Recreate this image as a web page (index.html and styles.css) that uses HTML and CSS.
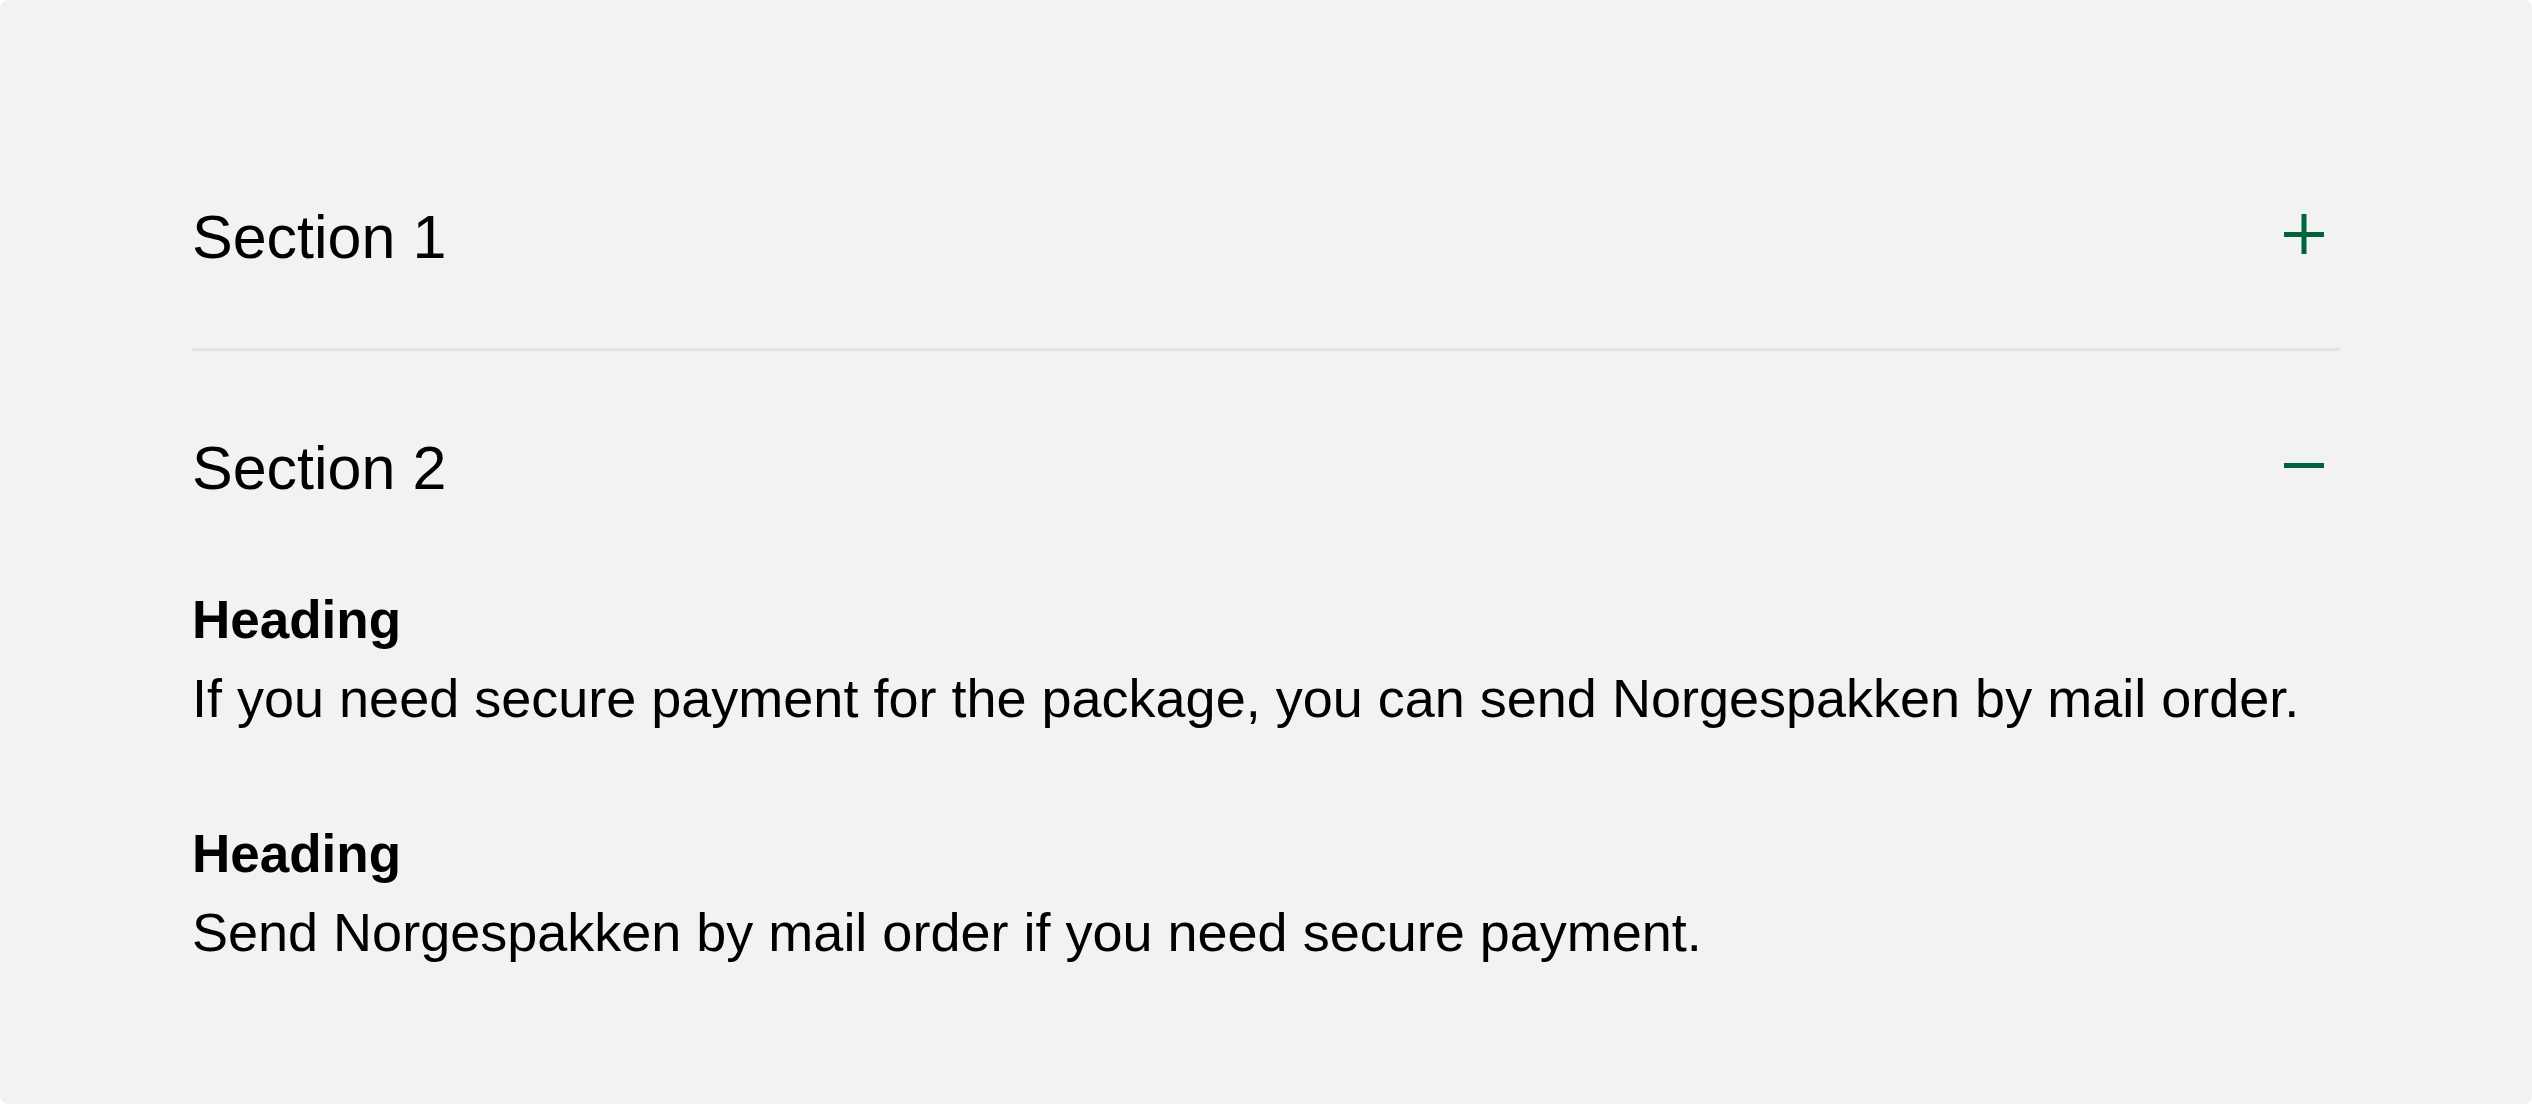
FILE: index.html
```html
<!DOCTYPE html>
<html lang="en">
<head>
<meta charset="utf-8">
<meta name="viewport" content="width=device-width, initial-scale=1">
<title>Accordion</title>
<link rel="stylesheet" href="styles.css">
</head>
<body>
<main class="panel">
  <section class="item">
    <h2 class="item-title">
      <button class="toggle" type="button" aria-expanded="false">
        <span class="label">Section 1</span>
        <svg class="icon" viewBox="0 0 40 40" aria-hidden="true"><path d="M0 20.5H40M20 0V40"/></svg>
      </button>
    </h2>
  </section>
  <section class="item">
    <h2 class="item-title">
      <button class="toggle" type="button" aria-expanded="true" aria-controls="content-2">
        <span class="label">Section 2</span>
        <svg class="icon" viewBox="0 0 40 40" aria-hidden="true"><path d="M0 20.5H40"/></svg>
      </button>
    </h2>
    <div class="content" id="content-2">
      <h3 class="heading">Heading</h3>
      <p class="text">If you need secure payment for the package, you can send Norgespakken by mail order.</p>
      <h3 class="heading">Heading</h3>
      <p class="text">Send Norgespakken by mail order if you need secure payment.</p>
    </div>
  </section>
</main>
</body>
</html>
```
FILE: styles.css
```css
* {
  box-sizing: border-box;
}

body {
  margin: 0;
  background: #fff;
  color: #000;
  font-family: "Liberation Sans", Arial, sans-serif;
}

.panel {
  min-height: 100vh;
  padding: 120px 192px;
  background: #f2f2f2;
  border-radius: 8px;
}

.item + .item {
  border-top: 3px solid #e3e3e3;
}

.item-title {
  margin: 0;
}

.toggle {
  display: flex;
  align-items: center;
  justify-content: space-between;
  width: 100%;
  height: 228px;
  padding: 0 16px 0 0;
  border: 0;
  background: none;
  color: inherit;
  font: inherit;
  font-size: 61px;
  font-weight: 400;
  line-height: 80px;
  text-align: left;
  cursor: pointer;
}

.label {
  padding-top: 6px;
}

.icon {
  width: 40px;
  height: 40px;
  fill: none;
  overflow: visible;
  stroke: #00643a;
  stroke-width: 5;
}

.content {
  padding-top: 2px;
}

.heading,
.text {
  margin: 0;
  font-size: 54px;
  line-height: 78px;
}

.heading {
  font-size: 53px;
  font-weight: 700;
}

.text + .heading {
  margin-top: 78px;
}
```
